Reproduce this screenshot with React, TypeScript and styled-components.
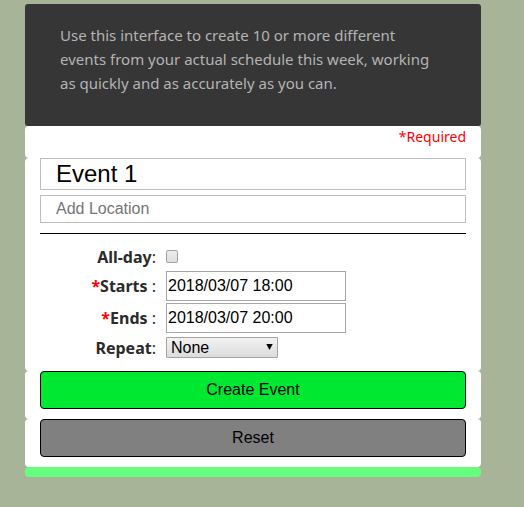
import React, { useState } from "react";
import styled, { createGlobalStyle } from "styled-components";

const GlobalStyle = createGlobalStyle`
  *, *::before, *::after { box-sizing: border-box; }
  body {
    margin: 0;
    background: #a8b497;
    color: #2b2b2b;
    font: 16px/24px "Noto Sans", sans-serif;
  }
`;

const Page = styled.main`
  padding: 4px 43px 30px 25px;
`;

const Intro = styled.header`
  padding: 19px 45px 31px 35px;
  border-radius: 3px;
  background: #363636;
  color: #b4b4b4;
  font-size: 15px;
`;

const IntroText = styled.p`
  margin: 0;
`;

const Panel = styled.section`
  padding: 0 15px 10px;
  border-radius: 4px;
  background: #fff;
`;

const RequiredNote = styled.p`
  margin: 0;
  color: #f00;
  font-size: 14px;
  line-height: 22px;
  text-align: right;
`;

const WideInput = styled.input<{ $title?: boolean }>`
  display: block;
  width: 100%;
  height: ${(p) => (p.$title ? "32px" : "28px")};
  margin: 0 0 ${(p) => (p.$title ? "5px" : "10px")};
  padding: 0 15px;
  border: 1px solid #bfbfbf;
  border-radius: 0;
  background: #fff;
  color: #000;
  font-family: "Liberation Sans", Arial, sans-serif;
  font-size: ${(p) => (p.$title ? "24px" : "16px")};
  &::placeholder { color: #757575; opacity: 1; }
`;

const Divider = styled.hr`
  height: 1px;
  margin: 0;
  border: 0;
  background: #000;
`;

const Rows = styled.div`
  display: grid;
  row-gap: 2px;
  padding: 10px 0 1px;
`;

const Row = styled.div`
  display: grid;
  grid-template-columns: 116px 1fr;
  column-gap: 10px;
  align-items: center;
  min-height: 25px;
`;

const Label = styled.label`
  text-align: right;
  white-space: pre;
`;

const Name = styled.b`
  font-weight: 700;
`;

const Star = styled.b`
  color: #f00;
`;

const DateInput = styled.input`
  width: 180px;
  height: 30px;
  padding: 0 1px;
  border: 1px solid #a6a6a6;
  border-radius: 0;
  background: #fff;
  color: #000;
  font: 16px "Liberation Sans", Arial, sans-serif;
`;

const Checkbox = styled.input`
  appearance: none;
  width: 12px;
  height: 13px;
  margin: 0;
  border: 1px solid #a3a3a3;
  border-radius: 2px;
  background: linear-gradient(#ededed, #dedede);
  &:checked { background: #555; }
`;

const SelectWrap = styled.div`
  position: relative;
  width: 112px;
  height: 21px;
`;

const Select = styled.select`
  appearance: none;
  display: block;
  width: 100%;
  height: 100%;
  padding: 0 20px 0 4px;
  border: 1px solid #a3a3a3;
  border-radius: 1px;
  background: linear-gradient(#f2f2f2, #dcdcdc);
  color: #000;
  font: 16px "Liberation Sans", Arial, sans-serif;
`;

const Arrow = styled.svg`
  position: absolute;
  top: 7px;
  right: 5px;
  pointer-events: none;
`;

const ActionButton = styled.button<{ $primary?: boolean }>`
  display: block;
  width: 100%;
  height: 38px;
  padding: 0;
  border: 1px solid #000;
  border-radius: 4px;
  background: ${(p) => (p.$primary ? "#00e930" : "#808080")};
  color: #000;
  font: 16px "Liberation Sans", Arial, sans-serif;
  cursor: pointer;
`;

const Footer = styled.footer`
  height: 10px;
  border-radius: 4px;
  background: #66ff7d;
`;

const initial = {
  title: "Event 1",
  location: "",
  starts: "2018/03/07 18:00",
  ends: "2018/03/07 20:00",
  repeat: "None",
  allDay: false,
};

export default function App() {
  const [form, setForm] = useState(initial);
  const update = (patch: Partial<typeof initial>) => setForm({ ...form, ...patch });

  return (
    <>
      <GlobalStyle />
      <Page>
        <Intro>
          <IntroText>
            Use this interface to create 10 or more different events from your actual
            schedule this week, working as quickly and as accurately as you can.
          </IntroText>
        </Intro>
        <form onSubmit={(e) => e.preventDefault()}>
          <Panel>
            <RequiredNote>*Required</RequiredNote>
          </Panel>
          <Panel>
            <WideInput
              $title
              aria-label="Event title"
              value={form.title}
              onChange={(e) => update({ title: e.target.value })}
            />
            <WideInput
              aria-label="Location"
              placeholder="Add Location"
              value={form.location}
              onChange={(e) => update({ location: e.target.value })}
            />
            <Divider />
            <Rows>
              <Row>
                <Label htmlFor="all-day"><Name>All-day</Name>:</Label>
                <Checkbox
                  id="all-day"
                  type="checkbox"
                  checked={form.allDay}
                  onChange={(e) => update({ allDay: e.target.checked })}
                />
              </Row>
              <Row>
                <Label htmlFor="starts"><Star>*</Star><Name>Starts</Name> :</Label>
                <DateInput
                  id="starts"
                  value={form.starts}
                  onChange={(e) => update({ starts: e.target.value })}
                />
              </Row>
              <Row>
                <Label htmlFor="ends"><Star>*</Star><Name>Ends</Name> :</Label>
                <DateInput
                  id="ends"
                  value={form.ends}
                  onChange={(e) => update({ ends: e.target.value })}
                />
              </Row>
              <Row>
                <Label htmlFor="repeat"><Name>Repeat</Name>:</Label>
                <SelectWrap>
                  <Select
                    id="repeat"
                    value={form.repeat}
                    onChange={(e) => update({ repeat: e.target.value })}
                  >
                    <option>None</option>
                    <option>Daily</option>
                    <option>Weekly</option>
                    <option>Monthly</option>
                  </Select>
                  <Arrow width="7" height="6" viewBox="0 0 7 6" aria-hidden="true">
                    <path d="M0.3 0H6.7L3.5 6Z" fill="#000" />
                  </Arrow>
                </SelectWrap>
              </Row>
            </Rows>
          </Panel>
          <Panel>
            <ActionButton $primary type="submit">Create Event</ActionButton>
          </Panel>
          <Panel>
            <ActionButton type="button" onClick={() => setForm(initial)}>Reset</ActionButton>
          </Panel>
        </form>
        <Footer />
      </Page>
    </>
  );
}
